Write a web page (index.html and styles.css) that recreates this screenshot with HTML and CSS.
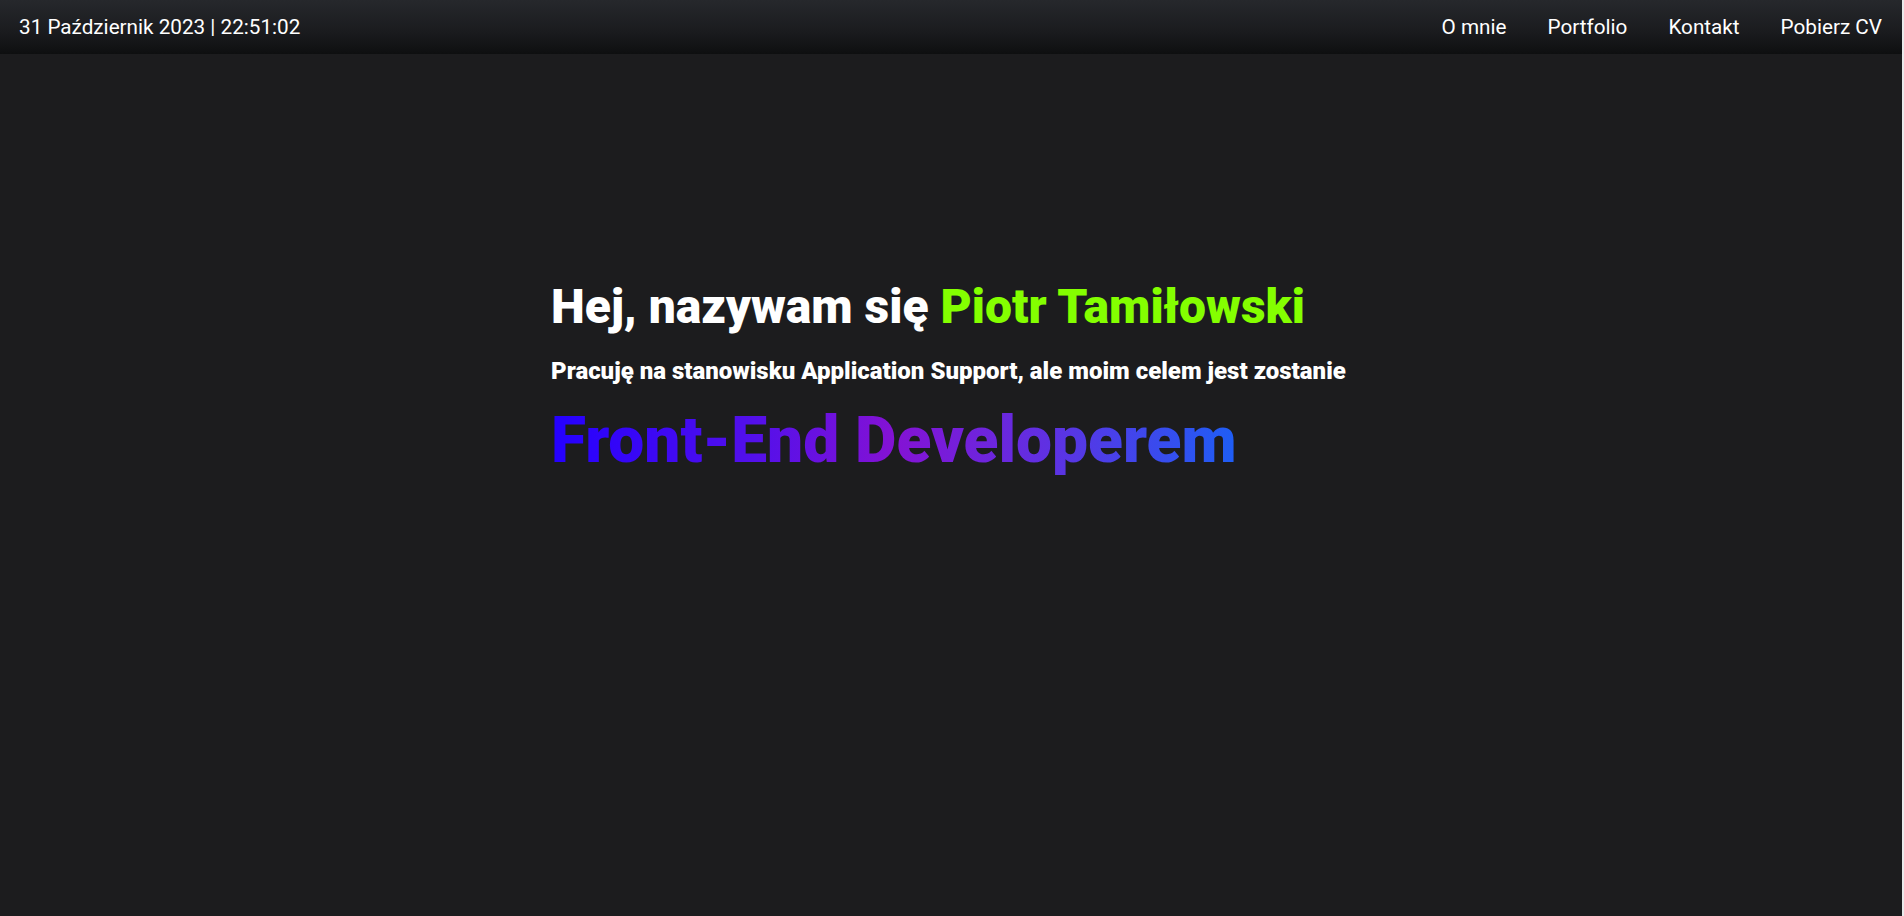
FILE: index.html
```html
<!DOCTYPE html>
<html lang="pl">
<head>
<meta charset="utf-8">
<title>Piotr Tamiłowski</title>
<link rel="stylesheet" href="styles.css">
</head>
<body>
<div class="page">
  <header class="topbar">
    <div class="clock">31 Październik 2023 | 22:51:02</div>
    <nav class="nav">
      <a href="#">O mnie</a>
      <a href="#">Portfolio</a>
      <a href="#">Kontakt</a>
      <a href="#">Pobierz CV</a>
    </nav>
  </header>
  <main class="hero">
    <div class="hero-inner">
      <h1 class="title">Hej, nazywam się <span class="name">Piotr Tamiłowski</span></h1>
      <p class="lead">Pracuję na stanowisku Application Support, ale moim celem jest zostanie</p>
      <p class="goal">Front-End Developerem</p>
    </div>
  </main>
</div>
</body>
</html>
```
FILE: styles.css
```css
html { background: #e9e9ea; }
body { margin: 0; font-family: Roboto, "Noto Sans", sans-serif; color: #fff; }
.page {
  margin-right: 2px;
  min-height: 916px;
  background: #1c1c1e;
  display: flex;
  flex-direction: column;
}
.topbar {
  height: 54px;
  display: flex;
  align-items: center;
  justify-content: space-between;
  padding: 0 20px 0 19px;
  background: linear-gradient(180deg, #26282c 0%, #1a1b1e 60%, #0e0f10 100%);
}
.clock { font-size: 20.7px; }
.nav { display: flex; gap: 41px; }
.nav a { color: #fff; text-decoration: none; font-size: 20.7px; }
.hero { flex: 1; }
.hero-inner {
  width: 800px;
  margin: 0 auto;
  padding-top: 224px;
}
.title {
  margin: 0;
  font-size: 48px;
  font-weight: 900;
  line-height: 1.2;
}
.name { color: #84ff00; }
.lead {
  margin: 21px 0 0;
  font-size: 24px;
  font-weight: 900;
  line-height: 1.2;
}
.goal {
  margin: 21px 0 0;
  font-size: 64px;
  font-weight: 900;
  line-height: 1.1;
  display: inline-block;
  background: linear-gradient(90deg, #2400ff 0%, #5410ea 30%, #8412d4 50%, #6030e2 72%, #1e5ef5 100%);
  -webkit-background-clip: text;
  background-clip: text;
  color: transparent;
}
```
